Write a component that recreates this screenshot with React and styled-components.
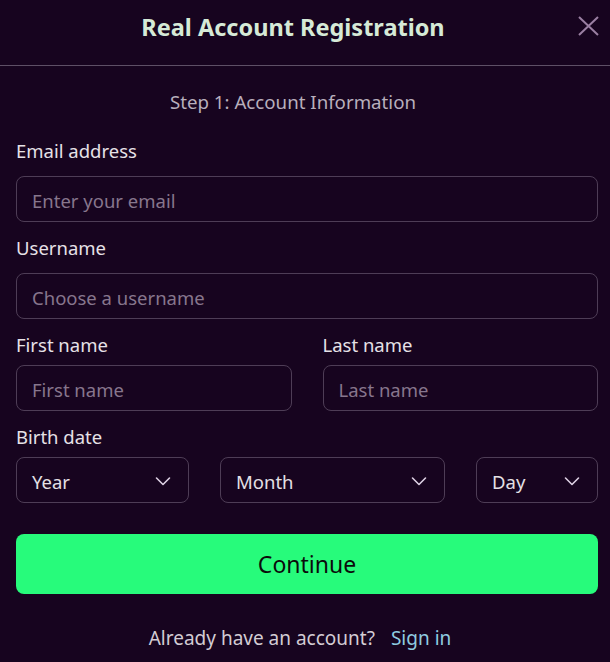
import React from "react";
import styled, { createGlobalStyle } from "styled-components";

const GlobalStyle = createGlobalStyle`
  html, body {
    margin: 0;
    padding: 0;
    background: #17041f;
  }
  * {
    box-sizing: border-box;
  }
`;

const Modal = styled.div`
  width: 610px;
  min-height: 662px;
  background: #17041f;
  font-family: "Noto Sans", "Open Sans", sans-serif;
  color: #e4dfe5;
`;

const Header = styled.div`
  position: relative;
  height: 66px;
  padding: 11px 24px 0 0;
  text-align: center;
  border-bottom: 1px solid #5e5066;
`;

const Title = styled.h1`
  margin: 0;
  font-size: 23.5px;
  line-height: 32px;
  font-weight: 700;
  color: #d6ead7;
`;

const CloseButton = styled.button`
  position: absolute;
  right: 11px;
  top: 16px;
  width: 21px;
  height: 20px;
  padding: 0;
  border: 0;
  background: none;
  cursor: pointer;
  display: flex;
`;

const Body = styled.div`
  padding: 24px 12px 0 16px;
  display: flex;
  flex-direction: column;
`;

const Step = styled.div`
  padding-right: 28px;
  text-align: center;
  font-size: 18.7px;
  line-height: 24px;
  color: #b8afbc;
  margin-bottom: 25px;
`;

const Field = styled.div`
  display: flex;
  flex-direction: column;
  gap: ${({ $gap }) => $gap || 13}px;
  margin-bottom: 14px;
`;

const Label = styled.label`
  font-size: 18.5px;
  color: #e6e1e7;
  line-height: 24px;
`;

const Input = styled.input`
  height: 46px;
  width: 100%;
  padding: 2px 15px 0;
  border: 1px solid #4e3d56;
  border-radius: 8px;
  background: transparent;
  font-family: inherit;
  font-size: 18.5px;
  color: #e4e0e5;
  outline: none;

  &::placeholder {
    color: #87768d;
  }
`;

const Row = styled.div`
  display: grid;
  grid-template-columns: ${({ $cols }) => $cols};
  column-gap: 31px;
`;

const Select = styled.div`
  height: 46px;
  padding: 2px 17px 0 15px;
  border: 1px solid #4e3d56;
  border-radius: 8px;
  display: flex;
  align-items: center;
  justify-content: space-between;
  font-size: 18.5px;
  color: #e4e0e5;
`;

const ContinueButton = styled.button`
  margin-top: 17px;
  height: 60px;
  width: 100%;
  border: 0;
  border-radius: 8px;
  background: #27fb7b;
  color: #0b0b0b;
  font-family: inherit;
  font-size: 23px;
  cursor: pointer;
`;

const Footer = styled.div`
  margin-top: 31px;
  padding-right: 14px;
  text-align: center;
  font-size: 19px;
  line-height: 26px;
  color: #d3ccd4;
`;

const SignIn = styled.a`
  margin-left: 16px;
  color: #8fcbe0;
  text-decoration: none;
`;

const Chevron = () => (
  <svg width="16" height="16" viewBox="0 0 16 16" fill="none">
    <path d="M1.5 5l6.5 6.5L14.5 5" stroke="#ddd0e3" strokeWidth="1.6" strokeLinecap="round" strokeLinejoin="round" />
  </svg>
);

const SelectBox = ({ children }) => (
  <Select>
    <span>{children}</span>
    <Chevron />
  </Select>
);

export default function App() {
  return (
    <>
      <GlobalStyle />
      <Modal>
        <Header>
          <Title>Real Account Registration</Title>
          <CloseButton aria-label="Close">
            <svg width="21" height="20" viewBox="0 0 21 20">
              <path d="M1 1l19 18M20 1L1 19" stroke="#9a7fa2" strokeWidth="2" />
            </svg>
          </CloseButton>
        </Header>
        <Body>
          <Step>Step 1: Account Information</Step>
          <Field>
            <Label>Email address</Label>
            <Input placeholder="Enter your email" />
          </Field>
          <Field>
            <Label>Username</Label>
            <Input placeholder="Choose a username" />
          </Field>
          <Row $cols="1fr 1fr">
            <Field $gap={8}>
              <Label>First name</Label>
              <Input placeholder="First name" />
            </Field>
            <Field $gap={8}>
              <Label>Last name</Label>
              <Input placeholder="Last name" />
            </Field>
          </Row>
          <Field $gap={8}>
            <Label>Birth date</Label>
            <Row $cols="173px 225px 122px">
              <SelectBox>Year</SelectBox>
              <SelectBox>Month</SelectBox>
              <SelectBox>Day</SelectBox>
            </Row>
          </Field>
          <ContinueButton>Continue</ContinueButton>
          <Footer>
            Already have an account?
            <SignIn href="#">Sign in</SignIn>
          </Footer>
        </Body>
      </Modal>
    </>
  );
}
